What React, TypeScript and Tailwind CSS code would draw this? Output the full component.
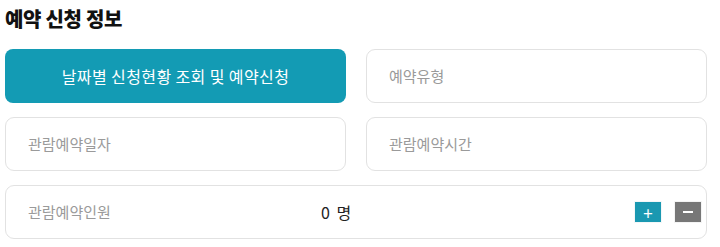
import React from "react";

const font = { fontFamily: '"Noto Sans CJK KR", "Noto Sans", sans-serif' };

export default function App() {
  return (
    <div className="w-[720px] h-[247px] bg-white px-[5px] pt-[6px] text-[#222]" style={font}>
      <h2 className="text-[20px] font-extrabold leading-[26px] tracking-[-0.3px] text-[#111]">예약 신청 정보</h2>
      <div className="mt-[17px] grid grid-cols-[341px_341px] gap-x-[20px] gap-y-[14px]">
        <button className="h-[54px] rounded-[8px] bg-[#139bb4] text-white text-[16px] tracking-[0.4px] flex items-center justify-center">
          날짜별 신청현황 조회 및 예약신청
        </button>
        <div className="h-[54px] rounded-[9px] border border-[#e2e2e2] flex items-center pl-[22px] text-[15px] text-[#9a9a9a]">
          예약유형
        </div>
        <div className="h-[54px] rounded-[9px] border border-[#e2e2e2] flex items-center pl-[22px] text-[15px] text-[#9a9a9a]">
          관람예약일자
        </div>
        <div className="h-[54px] rounded-[9px] border border-[#e2e2e2] flex items-center pl-[22px] text-[15px] text-[#9a9a9a]">
          관람예약시간
        </div>
        <div className="col-span-2 h-[54px] rounded-[9px] border border-[#e2e2e2] flex items-center pl-[22px] pr-[4px] text-[15px]">
          <span className="text-[#9a9a9a] w-[293px]">관람예약인원</span>
          <span className="text-[#222] text-[16px] tracking-[1.5px]">0 명</span>
          <div className="ml-auto flex items-center gap-[12px]">
            <div className="p-[1px] bg-[#f3f7f8]">
              <div className="w-[26px] h-[20px] bg-[#1a98b1] text-white flex items-center justify-center text-[17px] leading-none">+</div>
            </div>
            <div className="p-[1px] bg-[#f4f4f4]">
              <div className="w-[26px] h-[20px] bg-[#777777] flex items-center justify-center">
                <div className="w-[10px] h-[2px] bg-white" />
              </div>
            </div>
          </div>
        </div>
      </div>
    </div>
  );
}
